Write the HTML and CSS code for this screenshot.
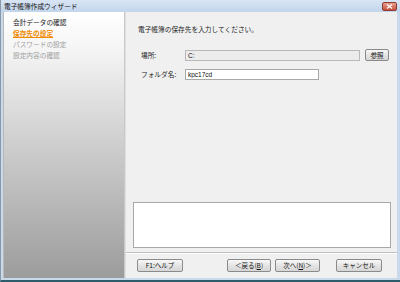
FILE: index.html
```html
<!DOCTYPE html>
<html lang="ja">
<head>
    <meta charset="UTF-8">
    <title>電子帳簿作成ウィザード</title>
    <link rel="stylesheet" href="styles.css">
</head>
<body>
    <div class="window">
        <div class="titlebar">
            <span class="title">電子帳簿作成ウィザード</span>
            <span class="close">
                <svg width="7" height="5" viewBox="0 0 7 5"><path d="M1 0.5 L6 4.5 M6 0.5 L1 4.5" stroke="#fff" stroke-width="1.2"/></svg>
            </span>
        </div>
        <div class="content">
            <div class="steps">
                <div class="step done">会計データの確認</div>
                <div class="step current">保存先の設定</div>
                <div class="step">パスワードの設定</div>
                <div class="step">設定内容の確認</div>
            </div>
            <div class="main">
                <div class="intro">電子帳簿の保存先を入力してください。</div>
                <div class="form">
                    <div class="row">
                        <label>場所:</label>
                        <input type="text" class="path" value="C:" disabled>
                        <button class="btn browse">参照</button>
                    </div>
                    <div class="row">
                        <label>フォルダ名:</label>
                        <input type="text" class="folder" value="kpc17cd">
                    </div>
                </div>
                <div class="notes"></div>
                <div class="sep"></div>
                <div class="buttons">
                    <button class="btn help">F1:ヘルプ</button>
                    <button class="btn back">＜戻る(<u>B</u>)</button>
                    <button class="btn next">次へ(<u>N</u>)＞</button>
                    <button class="btn cancel">キャンセル</button>
                </div>
            </div>
        </div>
    </div>
</body>
</html>
```

FILE: styles.css
```css
body {
    margin: 0;
    width: 400px;
    height: 282px;
    overflow: hidden;
    font-family: 'Noto Sans CJK JP', 'Liberation Sans', sans-serif;
    font-size: 6.7px;
    color: #1a1a1a;
}
.window {
    box-sizing: border-box;
    width: 400px;
    height: 282px;
    display: flex;
    flex-direction: column;
    background: #c9d9ec;
    border-left: 1px solid #8a98a8;
    border-bottom: 2px solid #2f5c6b;
    padding: 0 3px 2px 2px;
}
.titlebar {
    height: 12px;
    display: flex;
    align-items: center;
    justify-content: space-between;
    background: linear-gradient(#d9e5f4, #c3d5eb);
    margin: 0 -3px 0 -2px;
    padding: 0 3px 0 3px;
}
.title {
    line-height: 12px;
    color: #111;
}
.close {
    width: 15px;
    height: 9px;
    margin-top: 1px;
    border-radius: 2px;
    background: linear-gradient(#e8a092, #c9503d);
    border: 1px solid #8e3b30;
    box-sizing: border-box;
    display: flex;
    align-items: center;
    justify-content: center;
}
.content {
    flex: 1;
    display: flex;
    min-height: 0;
}
.steps {
    width: 122px;
    padding: 5px 0 0 9px;
    box-sizing: border-box;
    background: linear-gradient(#ffffff 0%, #f4f4f4 15%, #d8d8d8 40%, #9c9c9c 100%);
    border-left: 1px solid #b8b8b8;
    border-right: 1px solid #c8c8c8;
}
.step {
    height: 11px;
    line-height: 11px;
    color: #a0a0a0;
}
.step.done {
    color: #1a1a1a;
}
.step.current {
    color: #f08a00;
    font-weight: bold;
    text-decoration: underline;
}
.main {
    flex: 1;
    display: flex;
    flex-direction: column;
    background: #f0f0f0;
    border-left: 1px solid #e0e0e0;
}
.intro {
    margin: 13px 0 0 12px;
    line-height: 8px;
}
.form {
    margin-top: 9px;
    padding-left: 15px;
}
.row {
    display: flex;
    align-items: center;
    height: 12px;
    margin-top: 7px;
}
.row label {
    width: 44px;
}
input {
    box-sizing: border-box;
    height: 11px;
    padding: 0 2px;
    font-family: 'Liberation Sans', sans-serif;
    font-size: 6.5px;
    color: #111;
    border: 1px solid #a8a8a8;
    background: #fff;
    outline: none;
}
input.path {
    width: 175px;
    background: #ececec;
    border-color: #b8b8b8;
}
input.folder {
    width: 134px;
}
.btn {
    box-sizing: border-box;
    font-family: 'Noto Sans CJK JP', 'Liberation Sans', sans-serif;
    font-size: 6.5px;
    color: #111;
    padding: 0;
    border: 1px solid #8a8a8a;
    border-radius: 2px;
    background: linear-gradient(#f8f8f8, #e4e4e4 50%, #d6d6d6);
    height: 13px;
    line-height: 11px;
}
.browse {
    width: 24px;
    height: 12px;
    margin-left: 5px;
}
.notes {
    margin: auto 6px 0 7px;
    height: 46px;
    background: #fff;
    border: 1px solid #a8a8a8;
    box-sizing: border-box;
}
.sep {
    margin-top: 4px;
    border-top: 1px solid #c0c0c0;
    border-bottom: 1px solid #fff;
}
.buttons {
    display: flex;
    padding: 5px 0 6px 11px;
}
.help {
    width: 46px;
}
.back {
    width: 44px;
    margin-left: 44px;
}
.next {
    width: 45px;
    margin-left: 4px;
}
.cancel {
    width: 46px;
    margin-left: 16px;
}
.btn u {
    text-decoration: underline;
}
```
